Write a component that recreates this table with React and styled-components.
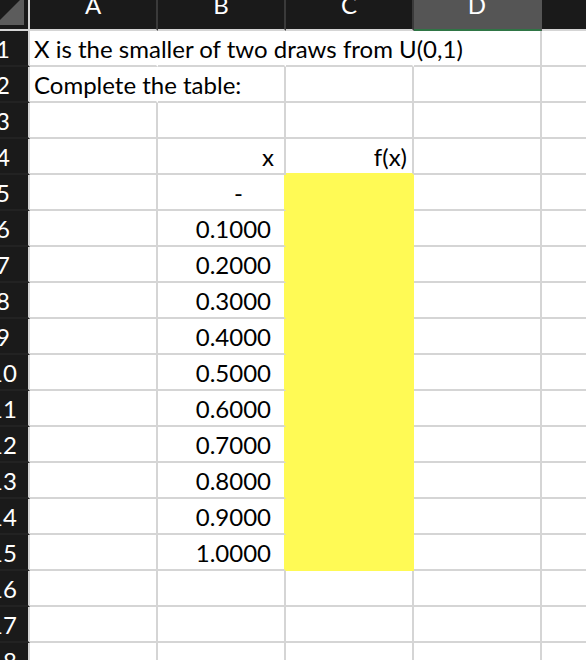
import React from 'react';
import styled, { createGlobalStyle } from 'styled-components';

const Global = createGlobalStyle`
  html, body { margin: 0; padding: 0; background: #ffffff; }
  body { width: 586px; height: 660px; overflow: hidden; }
`;

const GRID = '#d5d5d5';
const YELLOW = '#FFFA55';
const DARK = '#1a1a1a';
const NONE = 'transparent';

const Sheet = styled.div`
  display: grid;
  grid-template-columns: 30px repeat(4, 128px) 1fr;
  grid-template-rows: 31px;
  grid-auto-rows: 36px;
  width: 586px;
  height: 660px;
  overflow: hidden;
  background: #ffffff;
  font-family: Lato, "Open Sans", sans-serif;
  font-size: 24px;
  color: #000;
`;

const Corner = styled.div`
  background: ${DARK};
  border-right: 2px solid ${GRID};
  border-bottom: 2px solid ${GRID};
  overflow: hidden;
  svg { display: block; }
`;

const ColHead = styled.div`
  background: ${p => (p.$sel ? '#555555' : DARK)};
  border-right: ${p => (p.$last ? 'none' : `2px solid ${p.$sel ? '#555555' : '#3a3a3a'}`)};
  border-bottom: 2px solid ${p => (p.$sel ? '#2f7545' : GRID)};
  display: flex;
  justify-content: center;
  align-items: flex-start;
  overflow: hidden;
  color: #ffffff;
  line-height: 20px;
`;

const ColLabel = styled.span`
  margin-top: -5px;
`;

const RowHead = styled.div`
  background: ${DARK};
  border-right: 2px solid ${GRID};
  border-bottom: 2px solid #222222;
  display: flex;
  overflow: hidden;
  color: #ffffff;
  line-height: 33px;
  padding-top: 1px;
`;

const RowNum = styled.span`
  flex: 0 0 40px;
  margin-left: -17px;
  text-align: center;
`;

const Cell = styled.div`
  min-width: 0;
  background: ${p => p.$bg || 'transparent'};
  border-right: ${p => (p.$last ? 'none' : `2px solid ${p.$br || GRID}`)};
  border-bottom: 2px solid ${p => p.$bb || GRID};
  display: flex;
  justify-content: ${p => (p.$right ? 'flex-end' : 'flex-start')};
  padding: 1px ${p => p.$pr ?? 4}px 0 ${p => p.$pl ?? 4}px;
  line-height: 33px;
  white-space: nowrap;
`;

const values = ['-', '0.1000', '0.2000', '0.3000', '0.4000', '0.5000', '0.6000', '0.7000', '0.8000', '0.9000', '1.0000'];

function buildRow(r) {
  const cells = { A: {}, B: {}, C: {}, D: {}, E: {} };
  if (r === 1) {
    cells.A = { text: 'X is the smaller of two draws from U(0,1)', br: NONE };
    cells.B = { br: NONE };
    cells.C = { br: NONE };
  }
  if (r === 2) {
    cells.A = { text: 'Complete the table:', br: NONE };
  }
  if (r === 4) {
    cells.B = { text: 'x', right: true, pr: 10 };
    cells.C = { text: 'f(x)', right: true, pr: 5, bb: YELLOW };
  }
  if (r >= 5 && r <= 15) {
    const v = values[r - 5];
    cells.B = { text: v, right: true, pr: v === '-' ? 41 : 13, br: YELLOW };
    cells.C = { bg: YELLOW, br: YELLOW, bb: YELLOW };
  }
  return cells;
}

const rows = Array.from({ length: 18 }, (_, i) => i + 1);
const cols = ['A', 'B', 'C', 'D'];

export default function App() {
  return (
    <>
      <Global />
      <Sheet>
        <Corner>
          <svg width="28" height="29" viewBox="0 0 28 29">
            <polygon points="24,-4 24,25 -5,25" fill="#5c5c5c" />
          </svg>
        </Corner>
        {cols.map(c => (
          <ColHead key={c} $sel={c === 'D'}>
            <ColLabel>{c}</ColLabel>
          </ColHead>
        ))}
        <ColHead $last />
        {rows.map(r => {
          const cells = buildRow(r);
          return (
            <React.Fragment key={r}>
              <RowHead>
                <RowNum>{r}</RowNum>
              </RowHead>
              {['A', 'B', 'C', 'D', 'E'].map(c => {
                const d = cells[c];
                return (
                  <Cell
                    key={c}
                    $last={c === 'E'}
                    $bg={d.bg}
                    $br={d.br}
                    $bb={d.bb}
                    $right={d.right}
                    $pr={d.pr}
                  >
                    {d.text}
                  </Cell>
                );
              })}
            </React.Fragment>
          );
        })}
      </Sheet>
    </>
  );
}
